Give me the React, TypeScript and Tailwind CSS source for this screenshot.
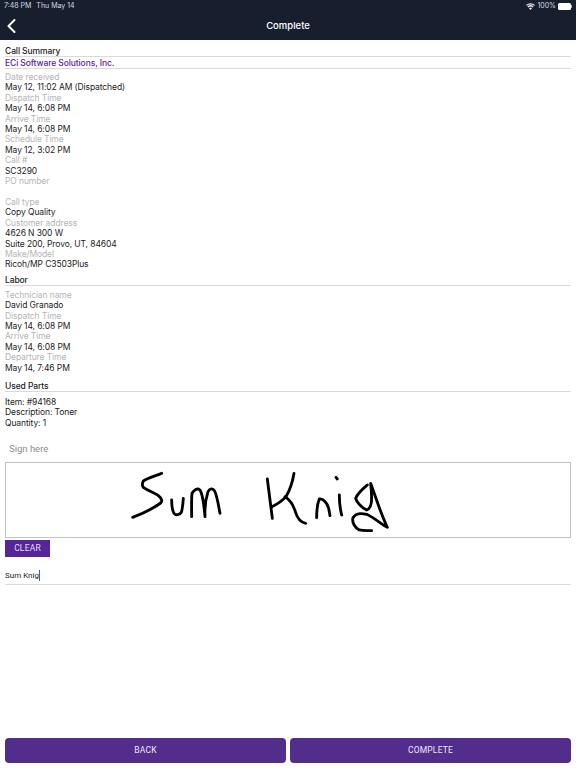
import React from "react";

const inter = { fontFamily: "Inter, 'Liberation Sans', sans-serif" };
const roboto = { fontFamily: "Roboto, 'Liberation Sans', sans-serif" };

function Field({ label, value }: { label: string; value?: React.ReactNode }) {
  return (
    <div className="text-[8.5px] leading-[10.4px] tracking-[-0.1px]">
      <div className="text-[#b5b5b5]">{label}</div>
      {value !== undefined && <div className="text-[#1c1c1c]">{value}</div>}
    </div>
  );
}

function Heading({ children, className = "" }: { children: React.ReactNode; className?: string }) {
  return (
    <div className={`mr-[5px] border-b border-[#d9d9d9] text-[8.5px] leading-[10px] tracking-[-0.1px] font-medium text-[#1c1c1c] ${className}`}>
      {children}
    </div>
  );
}

function Signature() {
  return (
    <svg viewBox="6 463 564 74" className="block h-full w-full" fill="none">
      <g stroke="#000" strokeWidth="8.5" strokeLinecap="round" strokeLinejoin="round">
        <g transform="translate(120 465) scale(0.3333)">
          <path d="M125 25 C105 33 85 38 70 48 C66 56 66 62 70 67 C85 78 105 84 115 92 C125 100 128 108 122 114 C100 130 70 145 38 157" />
          <path d="M155 105 C155 120 156 135 162 145 C168 152 178 150 184 142 C188 130 189 115 190 100" />
          <path d="M215 155 C215 130 214 105 216 85 C222 75 232 68 240 75 C250 90 252 125 255 155 C254 130 256 105 264 80 C270 70 278 68 284 78 C292 95 296 125 300 145" />
        </g>
        <g transform="translate(260 465) scale(0.3333)">
          <path d="M22 42 C26 75 32 120 37 160" />
          <path d="M102 25 C98 50 90 75 78 95 C65 110 50 118 37 125" />
          <path d="M75 95 C90 105 100 120 106 140 C112 160 120 172 137 175" />
          <path d="M170 158 C170 140 171 118 178 102 C190 100 202 115 206 130 L210 152" />
          <path d="M228 37 L232 42" />
          <path d="M238 90 C238 110 240 130 245 150" />
          <path d="M322 60 C310 70 295 82 287 100 C290 112 305 128 320 135 C335 130 338 110 332 55 C345 90 360 140 382 187 C365 178 345 160 320 148 C300 143 285 148 279 158 C275 172 285 188 298 195 C310 198 322 197 335 197" />
        </g>
      </g>
    </svg>
  );
}

export default function App() {
  return (
    <div className="flex h-[768px] w-[576px] flex-col overflow-hidden bg-white" style={inter}>
      <header className="relative h-[40px] shrink-0 bg-[#171e2e] text-white">
        <div className="flex h-[12px] items-center justify-between pl-[4px] pr-[4px] pt-[1px] text-[7px] text-[#d8dae0]">
          <div className="flex gap-[5px]">
            <span>7:48 PM</span>
            <span>Thu May 14</span>
          </div>
          <div className="flex items-center gap-[2px]">
            <svg width="9" height="7" viewBox="0 0 18 14" fill="#e8e9ec">
              <path d="M9 14 6 10.500a4.500 4.500 0 0 1 6 0Z M4.600 9 2.900 7a9 9 0 0 1 12.200 0L13.400 9a6.600 6.600 0 0 0-8.800 0Z M1.600 5.700 0 3.800a13.400 13.400 0 0 1 18 0l-1.600 1.900a11 11 0 0 0-14.800 0Z" />
            </svg>
            <span>100%</span>
            <div className="flex items-center">
              <div className="h-[7px] w-[13px] rounded-[1.5px] bg-white" />
              <div className="h-[3px] w-[1px] bg-[#aaaeb8]" />
            </div>
          </div>
        </div>
        <div className="flex h-[28px] items-center justify-center text-[9.5px] font-medium">
          <svg className="absolute left-[7px] top-[19px]" width="9" height="14" viewBox="0 0 9 14" fill="none" stroke="#fff" strokeWidth="2" strokeLinecap="round" strokeLinejoin="round">
            <path d="M7.500 1 1.500 7l6 6" />
          </svg>
          <span>Complete</span>
        </div>
      </header>

      <main className="flex flex-1 flex-col pl-[5px] pt-[6px]">
        <Heading>Call Summary</Heading>
        <div className="mr-[5px] border-b border-[#d9d9d9] pt-[1px] text-[8.5px] leading-[10px] tracking-[-0.1px] font-medium text-[#5a1ea6]">
          ECi Software Solutions, Inc.
        </div>
        <div className="mt-[3px]">
          <Field label="Date received" value="May 12, 11:02 AM (Dispatched)" />
          <Field label="Dispatch Time" value="May 14, 6:08 PM" />
          <Field label="Arrive Time" value="May 14, 6:08 PM" />
          <Field label="Schedule Time" value="May 12, 3:02 PM" />
          <Field label="Call #" value="SC3290" />
          <Field label="PO number" value={"\u00a0"} />
          <Field label="Call type" value="Copy Quality" />
          <Field label="Customer address" value={<>4626 N 300 W<br />Suite 200, Provo, UT, 84604</>} />
          <Field label="Make/Model" value="Ricoh/MP C3503Plus" />
        </div>
        <Heading className="mt-[5px]">Labor</Heading>
        <div className="mt-[4px]">
          <Field label="Technician name" value="David Granado" />
          <Field label="Dispatch Time" value="May 14, 6:08 PM" />
          <Field label="Arrive Time" value="May 14, 6:08 PM" />
          <Field label="Departure Time" value="May 14, 7:46 PM" />
        </div>
        <Heading className="mt-[8px]">Used Parts</Heading>
        <div className="mt-[5px] text-[8.5px] leading-[10.4px] tracking-[-0.1px] text-[#1c1c1c]">
          <div>Item: #94168</div>
          <div>Description: Toner</div>
          <div>Quantity: 1</div>
        </div>
        <div className="mt-[15px] pl-[4px] text-[9.5px] leading-[12px] text-[#8e8e8e]" style={roboto}>Sign here</div>
        <div className="mr-[5px] mt-[7px] h-[76px] border border-[#c4c4c4]">
          <Signature />
        </div>
        <button className="mt-[2px] h-[17px] w-[45px] bg-[#55269a] text-[8.5px] tracking-[0.2px] text-[#e6def2]" style={roboto}>CLEAR</button>
        <div className="mr-[5px] mt-[11px] flex h-[17px] items-start border-b border-[#dcdcdc] pt-[2px] text-[8px] leading-[11px] text-[#222222]" style={roboto}>
          <span>Sum Knig</span>
          <span className="h-[11px] w-[1px] bg-[#3b5bdb]" />
        </div>
        <div className="mt-auto mb-[5px] mr-[5px] flex gap-[4px]" style={roboto}>
          <button className="h-[25px] flex-1 rounded-[4px] bg-[#522d8c] text-[8.5px] tracking-[0.2px] text-[#eee8f6]">BACK</button>
          <button className="h-[25px] flex-1 rounded-[4px] bg-[#522d8c] text-[8.5px] tracking-[0.2px] text-[#eee8f6]">COMPLETE</button>
        </div>
      </main>
    </div>
  );
}
